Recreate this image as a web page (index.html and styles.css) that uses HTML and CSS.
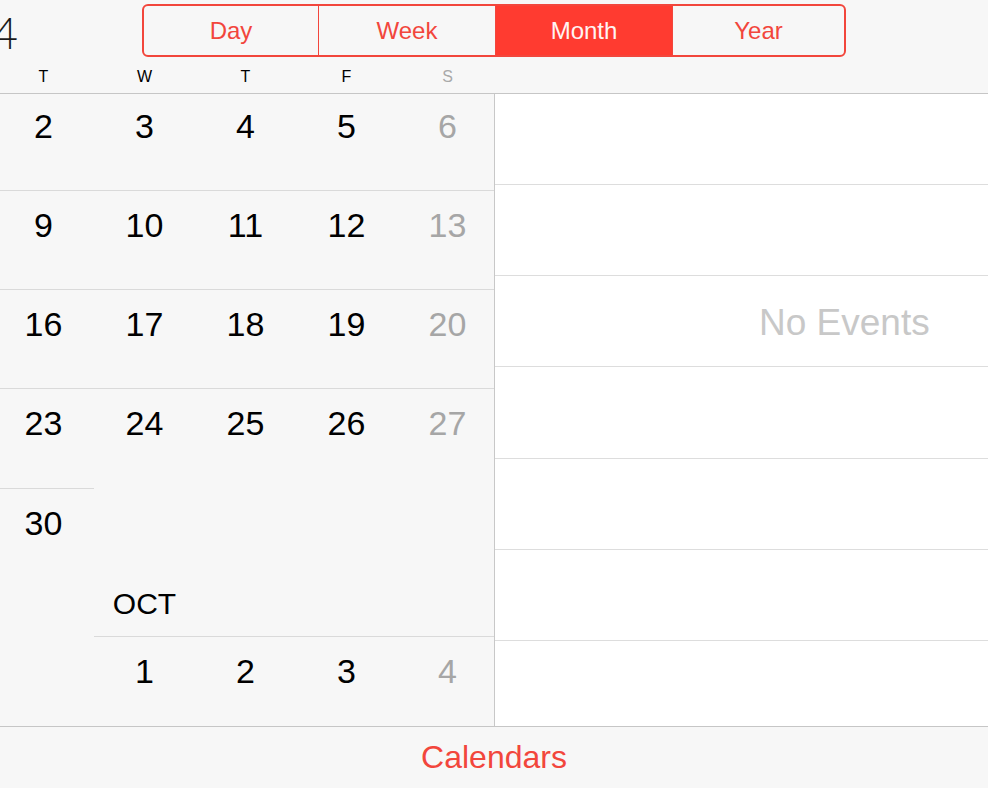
FILE: index.html
```html
<!DOCTYPE html>
<html>
<head>
<meta charset="utf-8">
<link rel="stylesheet" href="styles.css">
</head>
<body>
<div class="app">
  <header class="header">
    <div class="topbar">
      <div class="year"><span>2014</span></div>
      <div class="segmented">
        <div class="seg">Day</div>
        <div class="seg">Week</div>
        <div class="seg active">Month</div>
        <div class="seg">Year</div>
      </div>
    </div>
    <div class="weekdays cols">
      <div>T</div><div>W</div><div>T</div><div>F</div><div class="weekend">S</div>
    </div>
  </header>
  <main class="main">
    <section class="month">
      <div class="week cols first">
        <div class="day">2</div><div class="day">3</div><div class="day">4</div><div class="day">5</div><div class="day weekend">6</div>
      </div>
      <div class="week cols">
        <div class="day">9</div><div class="day">10</div><div class="day">11</div><div class="day">12</div><div class="day weekend">13</div>
      </div>
      <div class="week cols">
        <div class="day">16</div><div class="day">17</div><div class="day">18</div><div class="day">19</div><div class="day weekend">20</div>
      </div>
      <div class="week cols tall">
        <div class="day">23</div><div class="day">24</div><div class="day">25</div><div class="day">26</div><div class="day weekend">27</div>
      </div>
      <div class="week cols">
        <div class="day">30</div><div class="empty"></div><div class="empty"></div><div class="empty"></div><div class="empty"></div>
      </div>
      <div class="month-label cols">
        <div></div><div class="label">OCT</div>
      </div>
      <div class="week cols">
        <div class="empty"></div><div class="day">1</div><div class="day">2</div><div class="day">3</div><div class="day weekend">4</div>
      </div>
    </section>
    <section class="events">
      <div class="slot"></div>
      <div class="slot"></div>
      <div class="slot message">No Events</div>
      <div class="slot wide"></div>
      <div class="slot"></div>
      <div class="slot"></div>
      <div class="slot last"></div>
    </section>
  </main>
  <footer class="footer">Calendars</footer>
</div>
</body>
</html>
```
FILE: styles.css
```css
* { box-sizing: border-box; }
html, body { margin: 0; padding: 0; }
body {
  width: 988px;
  height: 788px;
  overflow: hidden;
  background: #f7f7f7;
  font-family: "Liberation Sans", Arial, sans-serif;
  color: #000;
}
.app {
  display: flex;
  flex-direction: column;
  height: 788px;
}
.header {
  height: 94px;
  border-bottom: 1px solid #c6c6c6;
  background: #f7f7f7;
}
.topbar {
  display: flex;
  align-items: flex-start;
  height: 57px;
  padding-top: 4px;
}
.year {
  width: 18px;
  height: 53px;
  display: flex;
  justify-content: flex-end;
  align-items: center;
  overflow: hidden;
  font-family: "Lato", "Liberation Sans", sans-serif;
  font-weight: 300;
  font-size: 44px;
  color: #1a1a1a;
  white-space: nowrap;
}
.year span { display: block; line-height: 44px; margin-top: 3px; }
.segmented {
  margin-left: 124px;
  width: 704px;
  height: 53px;
  border: 2px solid #f2463c;
  border-radius: 6px;
  display: grid;
  grid-template-columns: 174px 177px 177px 1fr;
  overflow: hidden;
}
.seg {
  display: flex;
  align-items: center;
  justify-content: center;
  font-size: 24px;
  color: #f2463c;
  border-left: 1.5px solid #f2463c;
}
.seg:first-child { border-left: none; }
.seg.active {
  background: #ff3b30;
  color: #fff3f2;
}
.cols {
  display: grid;
  grid-template-columns: repeat(5, 101px);
  margin-left: -7px;
}
.weekdays {
  height: 36px;
  align-items: center;
  font-size: 16px;
  padding-top: 4px;
}
.weekdays div { text-align: center; }
.weekdays .weekend { color: #a9a9a9; }
.main {
  display: flex;
  height: 632px;
}
.month {
  width: 495px;
  border-right: 1px solid #c8c8c8;
  overflow: hidden;
  background: #f7f7f7;
}
.week { height: 99px; }
.week.first { height: 96px; }
.week.tall { height: 100px; }
.day {
  border-top: 1px solid #dadada;
  text-align: center;
  font-size: 34px;
  line-height: 34px;
  padding-top: 17px;
}
.week.first .day { border-top: none; padding-top: 15px; }
.day.weekend { color: #a6a6a6; }
.empty { border-top: none; }
.month-label {
  height: 49px;
  padding-top: 2px;
}
.month-label .label {
  text-align: center;
  font-size: 30px;
  line-height: 30px;
}
.events {
  flex: 1;
  background: #fff;
  overflow: hidden;
}
.slot {
  height: 91px;
  border-bottom: 1px solid #dddddd;
}
.slot.wide { height: 92px; }
.slot.last { border-bottom: none; }
.message {
  display: flex;
  align-items: center;
  padding-left: 264px;
  padding-top: 3px;
  font-size: 37px;
  line-height: 37px;
  color: #c8c8c8;
}
.footer {
  height: 62px;
  border-top: 1px solid #c6c6c6;
  background: #f7f7f7;
  display: flex;
  align-items: center;
  justify-content: center;
  padding-bottom: 2px;
  font-size: 32px;
  line-height: 32px;
  color: #f2463c;
}
```
